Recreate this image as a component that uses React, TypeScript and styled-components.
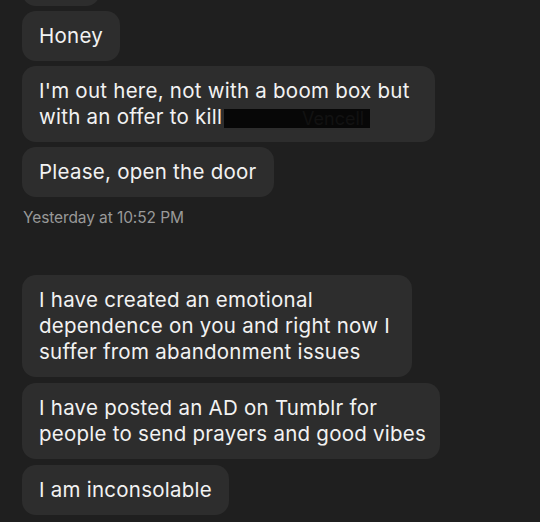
import React from "react";
import styled, { createGlobalStyle } from "styled-components";

const Global = createGlobalStyle`
  html, body { margin: 0; padding: 0; background: #1f1f1f; }
  body { overflow: hidden; width: 540px; height: 522px; }
`;

const Page = styled.div`
  width: 540px;
  height: 522px;
  overflow: hidden;
  background: #1f1f1f;
  font-family: Inter, "Noto Sans", sans-serif;
`;

const Thread = styled.div`
  display: flex;
  flex-direction: column;
  align-items: flex-start;
  gap: 5px;
  padding-left: 22px;
  margin-top: -44px;
`;

const Bubble = styled.div<{ $width?: number }>`
  box-sizing: border-box;
  background: #2d2d2d;
  color: #f2f2f2;
  border-radius: 14px;
  padding: 12px 17px;
  font-size: 20.5px;
  line-height: 26px;
  letter-spacing: 0.25px;
  white-space: nowrap;
  width: ${(p) => (p.$width ? `${p.$width}px` : "auto")};
`;

const Stamp = styled.div`
  color: #999999;
  font-size: 15.5px;
  line-height: 20px;
  margin: 6px 0 42px 1px;
  letter-spacing: -0.1px;
`;

const Redacted = styled.span`
  display: inline-block;
  width: 146px;
  height: 19px;
  margin-left: 2px;
  background: #070707;
  vertical-align: -4px;
  color: #121212;
  font-size: 18px;
  line-height: 19px;
  letter-spacing: 0;
  text-align: right;
  padding-right: 6px;
  box-sizing: border-box;
  overflow: hidden;
`;

const Lower = styled.div`
  display: flex;
  flex-direction: column;
  align-items: flex-start;
  gap: 6px;
`;

export default function App() {
  return (
    <Page>
      <Global />
      <Thread>
        <Bubble $width={78} aria-hidden="true">
          {"\u00a0"}
        </Bubble>
        <Bubble>Honey</Bubble>
        <Bubble $width={413}>
          I'm out here, not with a boom box but
          <br />
          with an offer to kill<Redacted>Vencell</Redacted>
        </Bubble>
        <Bubble>Please, open the door</Bubble>
        <Stamp>Yesterday at 10:52 PM</Stamp>
        <Lower>
          <Bubble $width={390}>
            I have created an emotional
            <br />
            dependence on you and right now I
            <br />
            suffer from abandonment issues
          </Bubble>
          <Bubble $width={418}>
            I have posted an AD on Tumblr for
            <br />
            people to send prayers and good vibes
          </Bubble>
          <Bubble>I am inconsolable</Bubble>
        </Lower>
      </Thread>
    </Page>
  );
}
